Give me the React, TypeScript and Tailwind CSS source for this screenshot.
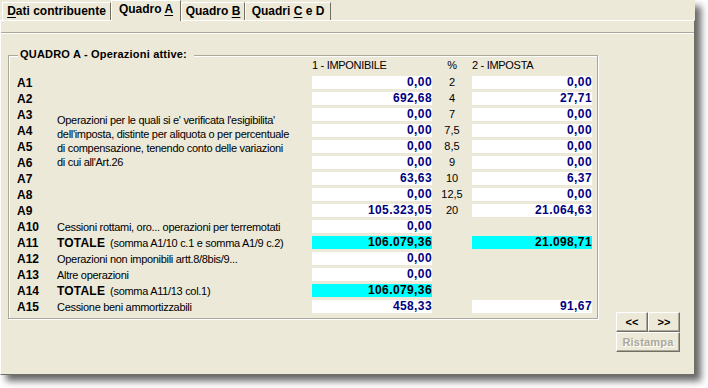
import React from 'react';

type Row = {
  id: string;
  desc?: React.ReactNode;
  span?: boolean;
  skipDesc?: boolean;
  v1: string;
  pct?: string;
  v2?: string;
  hi1?: boolean;
  hi2?: boolean;
};

const rows: Row[] = [
  { id: 'A1', v1: '0,00', pct: '2', v2: '0,00' },
  { id: 'A2', v1: '692,68', pct: '4', v2: '27,71' },
  {
    id: 'A3',
    span: true,
    desc: (
      <>
        Operazioni per le quali si e' verificata l'esigibilita'
        <br />
        dell'imposta, distinte per aliquota o per percentuale
        <br />
        di compensazione, tenendo conto delle variazioni
        <br />
        di cui all'Art.26
      </>
    ),
    v1: '0,00',
    pct: '7',
    v2: '0,00',
  },
  { id: 'A4', skipDesc: true, v1: '0,00', pct: '7,5', v2: '0,00' },
  { id: 'A5', skipDesc: true, v1: '0,00', pct: '8,5', v2: '0,00' },
  { id: 'A6', skipDesc: true, v1: '0,00', pct: '9', v2: '0,00' },
  { id: 'A7', v1: '63,63', pct: '10', v2: '6,37' },
  { id: 'A8', v1: '0,00', pct: '12,5', v2: '0,00' },
  { id: 'A9', v1: '105.323,05', pct: '20', v2: '21.064,63' },
  { id: 'A10', desc: 'Cessioni rottami, oro... operazioni per terremotati', v1: '0,00' },
  {
    id: 'A11',
    desc: (
      <>
        <span className="font-bold text-[12px] tracking-[0.2px] mr-[5px]">TOTALE</span>(somma A1/10 c.1 e somma A1/9 c.2)
      </>
    ),
    v1: '106.079,36',
    hi1: true,
    v2: '21.098,71',
    hi2: true,
  },
  { id: 'A12', desc: 'Operazioni non imponibili artt.8/8bis/9...', v1: '0,00' },
  { id: 'A13', desc: 'Altre operazioni', v1: '0,00' },
  {
    id: 'A14',
    desc: (
      <>
        <span className="font-bold text-[12px] tracking-[0.2px] mr-[5px]">TOTALE</span>(somma A11/13 col.1)
      </>
    ),
    v1: '106.079,36',
    hi1: true,
  },
  { id: 'A15', desc: 'Cessione beni ammortizzabili', v1: '458,33', v2: '91,67' },
];

function Field({ value, hi }: { value?: string; hi?: boolean }) {
  if (value === undefined) return <div />;
  return (
    <div
      className={`h-[13px] text-right font-bold text-[12px] leading-[13px] tracking-[0.4px] ${
        hi ? 'bg-[#00ffff] text-black' : 'bg-white text-[#000080]'
      }`}
    >
      {value}
    </div>
  );
}

function Tab({ children, active, width }: { children: React.ReactNode; active?: boolean; width: string }) {
  if (active) {
    return (
      <div
        className={`${width} h-[21px] -mb-[1px] relative z-10 bg-[#ece9d8] border-t border-l border-r border-t-white border-l-white border-r-[#716f64] pt-[1px] text-center font-bold text-[12px] leading-[14px]`}
      >
        {children}
      </div>
    );
  }
  return (
    <div
      className={`${width} h-[18px] border-t border-l border-r border-t-white border-l-white border-r-[#716f64] pt-[1px] text-center font-bold text-[12px] leading-[14px]`}
    >
      {children}
    </div>
  );
}

function Button({ children, disabled, width }: { children: React.ReactNode; disabled?: boolean; width: string }) {
  return (
    <div
      className={`${width} h-[20px] flex items-center justify-center border border-t-white border-l-white border-b-[#716f64] border-r-[#716f64] shadow-[inset_-1px_-1px_0_#aca899] font-bold text-[11px] tracking-[0.2px] ${
        disabled ? 'text-[#aca899] [text-shadow:1px_1px_0_#fff]' : 'text-black'
      }`}
    >
      {children}
    </div>
  );
}

export default function App() {
  return (
    <div className="min-h-screen bg-white font-['Liberation_Sans',Arial,sans-serif] text-black">
      <div className="w-[695px] h-[375px] bg-[#ece9d8] shadow-[6px_6px_7px_rgba(0,0,0,0.6)] flex flex-col">
        {/* Tabs */}
        <div className="h-[20px] flex items-end pl-[2px]">
          <Tab width="w-[109px]">
            <u className="underline-offset-2">D</u>ati contribuente
          </Tab>
          <Tab width="w-[70px]" active>
            Quadro <u className="underline-offset-2">A</u>
          </Tab>
          <Tab width="w-[64px]">
            Quadro <u className="underline-offset-2">B</u>
          </Tab>
          <Tab width="w-[86px]">
            Quadri <u className="underline-offset-2">C</u> e D
          </Tab>
        </div>

        {/* Tab panel */}
        <div className="flex-1 flex flex-col border border-t-white border-l-white border-r-[#716f64] border-b-[#716f64]">
          <div className="mt-[11px] h-[2px] border-t border-b border-t-[#aca899] border-b-white" />

          <div className="flex-1 flex items-start pl-[7px] pt-[21px] pb-[22px]">
            {/* Group box */}
            <div className="relative w-[590px] border border-[#aca899] shadow-[1px_1px_0_#fff,inset_1px_1px_0_#fff] pt-[3px] pl-[8px] pb-[2px]">
              <div className="absolute left-[9px] -top-[8px] pl-[2px] pr-[7px] bg-[#ece9d8] font-bold text-[11px] leading-[13px] tracking-[0.2px]">
                QUADRO A - Operazioni attive:
              </div>

              <div className="grid grid-cols-[40px_255px_120px_40px_120px] grid-rows-[17px_repeat(15,16px)] text-[11px] tracking-[-0.3px]">
                <div />
                <div />
                <div className="leading-[13px]">1 - IMPONIBILE</div>
                <div className="leading-[13px] text-center">%</div>
                <div className="leading-[13px]">2 - IMPOSTA</div>

                {rows.map((r) => (
                  <React.Fragment key={r.id}>
                    <div className="font-bold text-[12px] tracking-normal leading-[14px]">{r.id}</div>
                    {r.skipDesc ? null : r.span ? (
                      <div className="row-span-4 pt-[5px] leading-[14px]">{r.desc}</div>
                    ) : (
                      <div className="leading-[14px] whitespace-nowrap">{r.desc}</div>
                    )}
                    <Field value={r.v1} hi={r.hi1} />
                    <div className="text-center leading-[13px] tracking-normal">{r.pct}</div>
                    <Field value={r.v2} hi={r.hi2} />
                  </React.Fragment>
                ))}
              </div>
            </div>

            {/* Buttons */}
            <div className="self-end ml-[18px] flex flex-col">
              <div className="flex">
                <Button width="w-[32px]">&lt;&lt;</Button>
                <Button width="w-[32px]">&gt;&gt;</Button>
              </div>
              <Button width="w-[64px]" disabled>
                Ristampa
              </Button>
            </div>
          </div>
        </div>
      </div>
    </div>
  );
}
